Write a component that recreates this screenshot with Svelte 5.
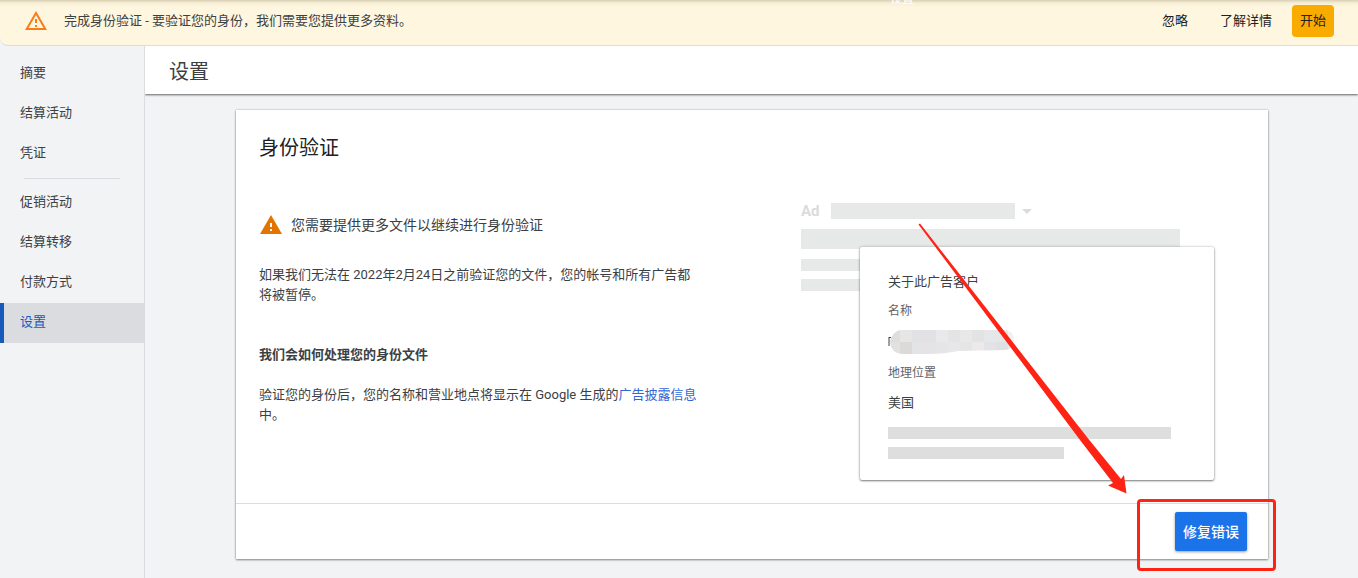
<script>
  const primary = ['摘要', '结算活动', '凭证'];
  const secondary = ['促销活动', '结算转移', '付款方式', '设置'];
  const active = '设置';

  const mosaic = [
    ['#dedede', '#e8e6e4', '#e2e2e4', '#e2e1e3', '#e9e8ea', '#e4e4e5', '#e8e8e9', '#e2e3e3', '#e6e7e8', '#e5e6e7', '#f1f1f2'],
    ['#e1e1e2', '#dcdad8', '#e3e4e6', '#e5e3e5', '#e5e4e6', '#e7e7e9', '#e5e5e6', '#ede8ea', '#e2e3e5', '#dfe0e2', '#e9e9eb']
  ];
</script>

<div class="page">
  <header class="notice">
    <span class="peek" aria-hidden="true">设置</span>
    <svg class="notice-icon" viewBox="0 0 24 24" aria-hidden="true">
      <path d="M12 5.99 19.53 19H4.47L12 5.99M12 2 1 21h22L12 2zm1 14h-2v2h2v-2zm0-6h-2v4h2v-4z" />
    </svg>
    <p>完成身份验证 - 要验证您的身份，我们需要您提供更多资料。</p>
    <div class="notice-actions">
      <button type="button">忽略</button>
      <button type="button">了解详情</button>
      <button type="button" class="start">开始</button>
    </div>
  </header>

  <div class="body">
    <nav class="sidebar">
      {#each primary as item}
        <a href="#top">{item}</a>
      {/each}
      <hr />
      {#each secondary as item}
        <a href="#top" class:active={item === active}>{item}</a>
      {/each}
    </nav>

    <main>
      <div class="titlebar"><h1>设置</h1></div>

      <section class="card">
        <h2>身份验证</h2>
        <div class="columns">
          <div class="copy">
            <div class="status">
              <svg viewBox="0 0 24 24" aria-hidden="true">
                <path d="M1 21h22L12 2 1 21zm12-3h-2v-2h2v2zm0-4h-2v-4h2v4z" />
              </svg>
              <span>您需要提供更多文件以继续进行身份验证</span>
            </div>
            <p>如果我们无法在 2022年2月24日之前验证您的文件，您的帐号和所有广告都将被暂停。</p>
            <h3>我们会如何处理您的身份文件</h3>
            <p>验证您的身份后，您的名称和营业地点将显示在 Google 生成的<a href="#top">广告披露信息</a>中。</p>
          </div>

          <div class="preview">
            <div class="ad-head">
              <span class="ad">Ad</span>
              <span class="ad-bar"></span>
              <span class="caret"></span>
            </div>
            <div class="ad-title"></div>
            <div class="ad-line"></div>
            <div class="ad-line"></div>
            <div class="advertiser">
              <h4>关于此广告客户</h4>
              <div class="label">名称</div>
              <div class="masked">
                <svg viewBox="0 0 126 24" aria-hidden="true">
                  <defs>
                    <clipPath id="smudge">
                      <path d="M12 0H118Q126 1 126 10Q125 20 116 20L70 21Q56 24 40 24H14Q3 23 2 12Q4 2 12 0Z" />
                    </clipPath>
                  </defs>
                  <path d="M1 7V16M1 7.500H3" stroke="#3c4043" fill="none" />
                  <g clip-path="url(#smudge)" shape-rendering="crispEdges">
                    {#each mosaic as row, y}
                      {#each row as colour, x}
                        <rect x={x * 12} y={y * 12} width="12" height="12" fill={colour} />
                      {/each}
                    {/each}
                  </g>
                </svg>
              </div>
              <div class="label">地理位置</div>
              <div class="place">美国</div>
              <div class="bar"></div>
              <div class="bar short"></div>
            </div>
            <svg class="arrow" viewBox="0 0 210 272" aria-hidden="true">
              <path d="M0.500 1.500 2 0.500 170.500 216 203 256 206 252 208.500 270.500 190 262.500 195 260 162 217Z" />
            </svg>
          </div>
        </div>
        <footer>
          <span class="highlight"></span>
          <button type="button">修复错误</button>
        </footer>
      </section>
    </main>
  </div>
</div>

<style>
  :global(body) { margin: 0; background: #f1f3f4; }
  .page {
    min-height: 100vh;
    display: flex;
    flex-direction: column;
    overflow: hidden;
    font: 13px/20px Roboto, "Noto Sans CJK SC", sans-serif;
    color: #3c4043;
  }
  * { box-sizing: border-box; }
  h1, h2, h3, h4, p { margin: 0; font-weight: 400; }
  a { text-decoration: none; }
  button { font: inherit; border: 0; padding: 0; background: none; color: inherit; cursor: pointer; white-space: nowrap; }

  .notice {
    position: relative;
    display: flex;
    align-items: center;
    height: 46px;
    padding: 0 24px 4px;
    background: linear-gradient(#d9cfb5, #f6eed6 3px, #fef6df 7px);
    border-bottom: 1px solid #dadce0;
    border-bottom-left-radius: 8px;
    overflow: hidden;
  }
  .peek { position: absolute; top: -9px; left: 890px; font-size: 12px; line-height: 16px; color: #fff; }
  .notice-icon { width: 24px; height: 24px; margin-right: 16px; fill: #fa7b17; }
  .notice-actions { display: flex; align-items: center; margin-left: auto; gap: 20px; color: #202124; }
  .notice-actions button:first-child { margin-right: 12px; }
  .notice-actions .start { height: 32px; padding: 0 8px; border-radius: 4px; background: #f9ab00; }

  .body { flex: 1; display: flex; }
  .sidebar { flex: 0 0 145px; padding-top: 8px; border-right: 1px solid #dadce0; }
  .sidebar a { display: block; padding: 9px 20px 11px; color: #3c4043; }
  .sidebar hr { height: 1px; margin: 4px 24px; border: 0; background: #dadce0; }
  .sidebar .active { padding-left: 16px; border-left: 4px solid #185abc; background: #dadce0; color: #185abc; }

  main { flex: 1; min-width: 0; overflow: hidden; }
  .titlebar { padding: 12px 24px 8px; background: #fff; box-shadow: 0 1px 2px rgba(0, 0, 0, .6); }
  h1 { font-size: 20px; line-height: 28px; }

  .card { margin: 16px 90px 16px 91px; background: #fff; box-shadow: 0 0 2px rgba(0, 0, 0, .25), 0 1px 2px rgba(0, 0, 0, .4); }
  h2 { padding: 24px 23px 0; font-size: 20px; line-height: 28px; color: #202124; }
  .columns { display: flex; justify-content: space-between; padding: 40px 53px 23px 23px; }
  .copy { width: 442px; padding-top: 11px; }
  .status { display: flex; align-items: center; gap: 8px; height: 24px; margin-bottom: 28px; font-size: 14px; }
  .status svg { width: 24px; height: 24px; fill: #e37400; }
  h3 { margin: 40px 0 20px; font-size: 13px; line-height: 20px; font-weight: 700; }
  .copy a { color: #3367d6; }

  .preview { position: relative; width: 414px; padding-top: 1px; }
  .ad-head { display: flex; align-items: center; height: 16px; margin-bottom: 10px; }
  .ad { width: 30px; font-size: 15px; font-weight: 700; color: #dadcdc; }
  .ad-bar { width: 184px; height: 16px; background: #e7e9e8; }
  .caret { margin-left: 7px; border: 5px solid transparent; border-top-color: #dadcdc; border-bottom: 0; }
  .ad-title { width: 379px; height: 20px; margin-bottom: 10px; background: #e7e9e8; }
  .ad-line { width: 80px; height: 12px; margin-bottom: 8px; background: #e7e9e8; }
  .advertiser {
    position: relative;
    width: 354px;
    margin: -52px 0 0 59px;
    padding: 25px 28px 13px;
    border-radius: 2px;
    background: #fff;
    box-shadow: 0 0 3px rgba(0, 0, 0, .25), 0 1px 2px rgba(0, 0, 0, .45);
  }
  h4 { font-size: 13px; line-height: 20px; margin-bottom: 9px; }
  .label { font-size: 12px; line-height: 20px; color: #5f6368; }
  .masked { height: 24px; margin: 9px 0; }
  .masked svg { display: block; width: 126px; height: 24px; }
  .place { margin: 10px 0 14px; }
  .bar { width: 283px; height: 12px; margin-bottom: 8px; background: #dedede; }
  .short { width: 176px; }
  .arrow { position: absolute; left: 117px; top: 21px; width: 210px; height: 272px; fill: #ff2315; pointer-events: none; }

  footer { position: relative; display: flex; justify-content: flex-end; padding: 8px 21px; border-top: 1px solid #dadce0; }
  footer button {
    height: 39px;
    padding: 0 8px;
    border-radius: 2px;
    background: #1a73e8;
    box-shadow: 0 1px 3px rgba(0, 0, 0, .4);
    color: #fff;
    font-size: 14px;
    font-weight: 500;
  }
  .highlight { position: absolute; right: -8px; top: -5px; width: 139px; height: 72px; border: 3px solid #ff2315; border-radius: 4px; pointer-events: none; }
</style>
